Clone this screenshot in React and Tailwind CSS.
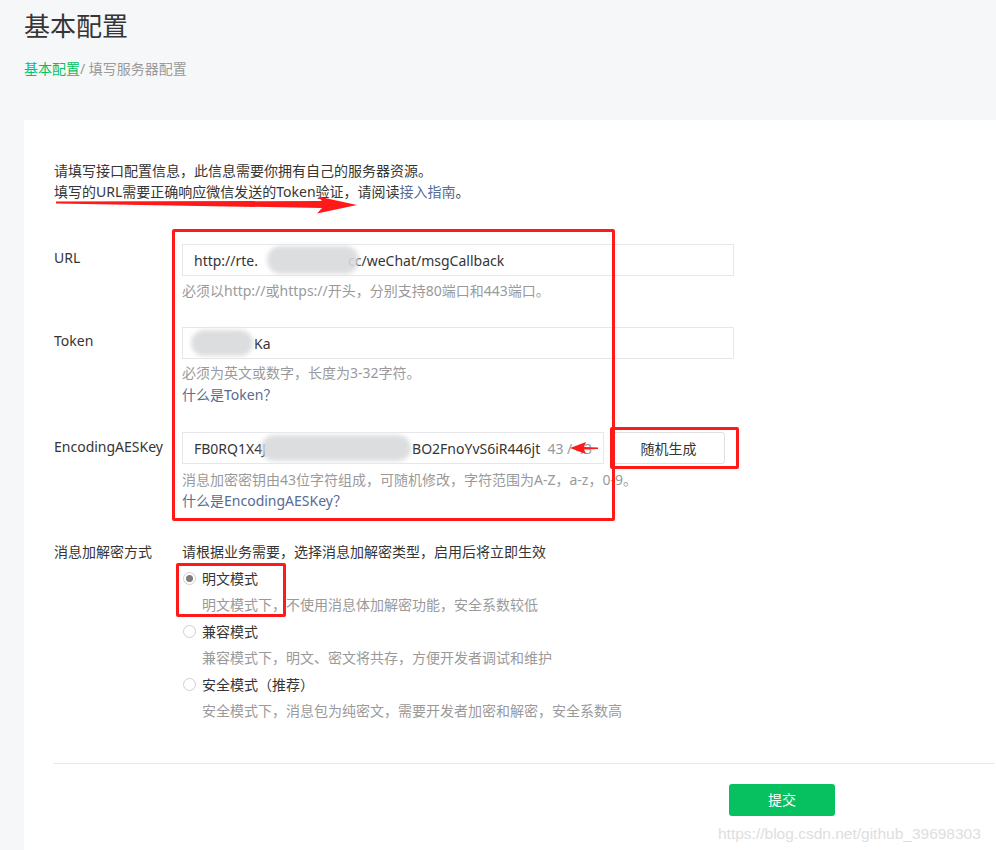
import React from "react";

const font = { fontFamily: '"Noto Sans", "Noto Sans CJK SC", sans-serif' };

const Blur = ({ className }) => (
  <div className={"absolute rounded-full bg-[#d9dadc] blur-[2px] opacity-90 " + className} />
);

const Radio = ({ checked, label, desc }) => (
  <div>
    <div className="flex items-center leading-[26.5px]">
      <span className="ml-px mr-[6px] flex h-[13px] w-[13px] items-center justify-center rounded-full border border-[#cfcfcf] bg-white">
        {checked && <span className="h-[7px] w-[7px] rounded-full bg-[#7d7d7d]" />}
      </span>
      <span className="text-[#353535]">{label}</span>
    </div>
    <div className="pl-[20px] leading-[26.5px] text-[#9a9a9a]">{desc}</div>
  </div>
);

export default function App() {
  return (
    <div className="relative min-h-[850px] overflow-hidden bg-[#f6f7f9] text-[14px] text-[#353535]" style={font}>
      {/* header */}
      <div className="pl-[24px] pt-[8px]">
        <h1 className="text-[26px] leading-[36px] text-[#353535]">基本配置</h1>
        <div className="mt-[15px] leading-[20px]">
          <span className="text-[#07c160]">基本配置</span>
          <span className="text-[#9a9a9a]">/ 填写服务器配置</span>
        </div>
      </div>

      {/* card */}
      <div className="ml-[24px] mt-[41px] w-[1000px] bg-white px-[30px] pb-[60px] pt-[40px]">
        <p className="leading-[21px]">请填写接口配置信息，此信息需要你拥有自己的服务器资源。</p>
        <p className="leading-[21px]">
          填写的URL需要正确响应微信发送的Token验证，请阅读<span className="text-[#576b95]">接入指南</span>。
        </p>

        {/* URL */}
        <div className="mt-[42px] flex">
          <div className="w-[128px] leading-[28px]">URL</div>
          <div>
            <div className="relative flex h-[32px] w-[552px] items-center border border-[#e7e7eb] px-[11px]">
              <span>http://rte.</span>
              <span className="w-[90px]" />
              <span>cc/weChat/msgCallback</span>
              <Blur className="left-[84px] top-[1px] h-[28px] w-[92px]" />
            </div>
            <div className="mt-[5px] leading-[20px] text-[#9a9a9a]">
              必须以http://或https://开头，分别支持80端口和443端口。
            </div>
          </div>
        </div>

        {/* Token */}
        <div className="mt-[26px] flex">
          <div className="w-[128px] leading-[28px]">Token</div>
          <div>
            <div className="relative flex h-[32px] w-[552px] items-center border border-[#e7e7eb] px-[11px]">
              <span className="w-[60px]" />
              <span>Ka</span>
              <Blur className="left-[8px] top-[2px] h-[26px] w-[62px]" />
            </div>
            <div className="mt-[3px] leading-[22px] text-[#9a9a9a]">必须为英文或数字，长度为3-32字符。</div>
            <div className="leading-[22px] text-[#576b95]">什么是Token？</div>
          </div>
        </div>

        {/* EncodingAESKey */}
        <div className="mt-[26px] flex">
          <div className="w-[128px] leading-[30px]">EncodingAESKey</div>
          <div>
            <div className="flex">
              <div className="relative flex h-[32px] w-[422px] items-center border border-[#e7e7eb] px-[11px]">
                <span>FB0RQ1X4J</span>
                <span className="w-[146px]" />
                <span>BO2FnoYvS6iR446jt</span>
                <span className="ml-auto text-[#9a9a9a]">43 / 43</span>
                <Blur className="left-[78px] top-[2px] h-[26px] w-[150px]" />
              </div>
              <button className="ml-[8px] h-[32px] w-[113px] rounded-[3px] border border-[#e0e0e0] bg-white text-[#353535]">
                随机生成
              </button>
            </div>
            <div className="mt-[5px] leading-[21px] text-[#9a9a9a]">
              消息加密密钥由43位字符组成，可随机修改，字符范围为A-Z，a-z，0-9。
            </div>
            <div className="leading-[21px] text-[#576b95]">什么是EncodingAESKey？</div>
          </div>
        </div>

        {/* mode */}
        <div className="mt-[28px] flex">
          <div className="w-[128px] leading-[26.5px]">消息加解密方式</div>
          <div>
            <div className="leading-[26.5px]">请根据业务需要，选择消息加解密类型，启用后将立即生效</div>
            <Radio checked label="明文模式" desc="明文模式下，不使用消息体加解密功能，安全系数较低" />
            <Radio label="兼容模式" desc="兼容模式下，明文、密文将共存，方便开发者调试和维护" />
            <Radio label="安全模式（推荐）" desc="安全模式下，消息包为纯密文，需要开发者加密和解密，安全系数高" />
          </div>
        </div>

        <div className="mt-[38px] border-t border-[#e7e7eb]" />
        <button className="ml-[675px] mt-[20px] h-[32px] w-[106px] rounded-[3px] bg-[#07c160] text-white">
          提交
        </button>
      </div>

      {/* red annotations */}
      <div className="pointer-events-none absolute left-[172px] top-[229px] h-[292px] w-[443px] rounded-[2px] border-[3px] border-[#ff1a1a]" />
      <div className="pointer-events-none absolute left-[610px] top-[427px] h-[42px] w-[129px] rounded-[2px] border-[3px] border-[#ff1a1a]" />
      <div className="pointer-events-none absolute left-[176px] top-[563px] h-[54px] w-[110px] rounded-[2px] border-[3px] border-[#ff1a1a]" />
      <svg className="pointer-events-none absolute left-0 top-0" width="996" height="850">
        <polygon points="56,201.5 322,201 318,196.5 357,205 317,213.5 322,208 56,203.5" fill="#ff1a1a" />
        <polygon points="598,447.5 584,447 586,442 570,448 586,454 584,449.5 598,449" fill="#ff1a1a" />
      </svg>

      {/* watermark */}
      <div
        className="absolute left-[718px] top-[822px] whitespace-nowrap text-[15.5px] text-[#dedede]"
        style={{ fontFamily: '"Liberation Sans", Arial, sans-serif' }}
      >
        https://blog.csdn.net/github_39698303
      </div>
    </div>
  );
}
